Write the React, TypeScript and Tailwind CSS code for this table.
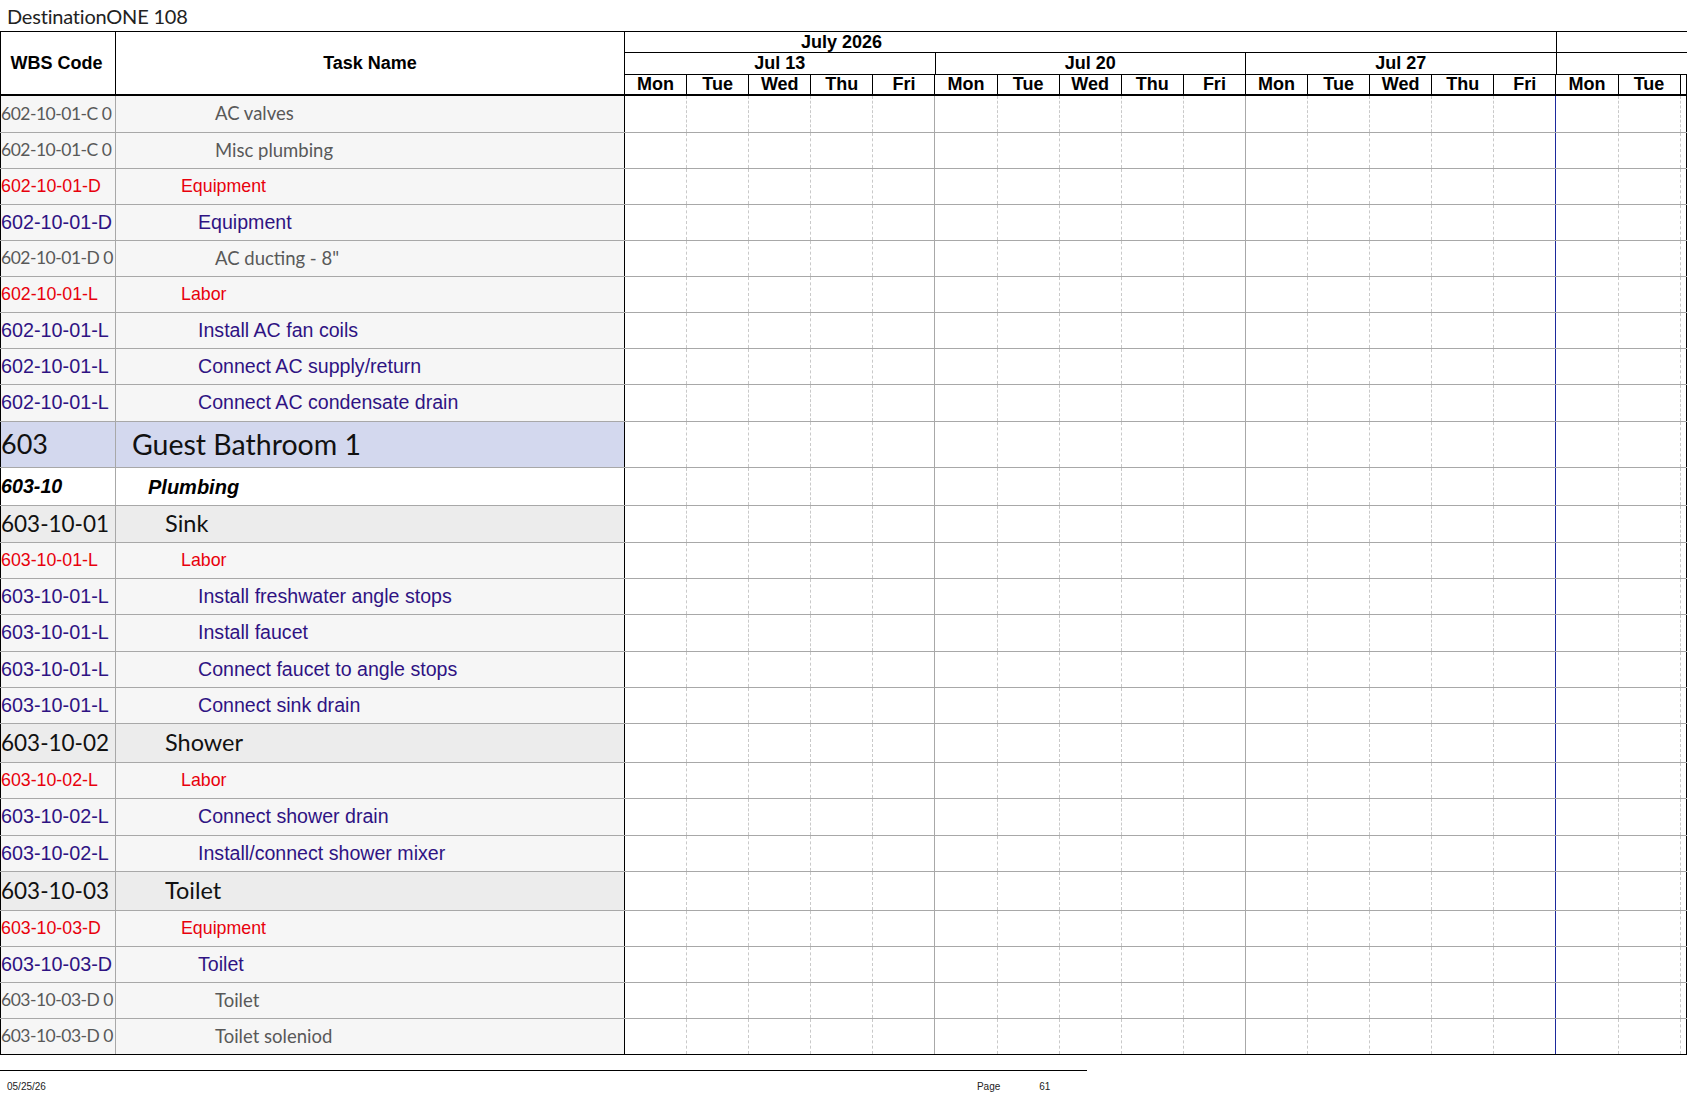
import React from 'react';

type RowType = 'gray' | 'red' | 'purple' | 'area' | 'group' | 'sub';

interface Row {
  code: string;
  name: string;
  t: RowType;
  h: number;
}

const rows: Row[] = [
  { code: '602-10-01-C 0', name: 'AC valves', t: 'gray', h: 37 },
  { code: '602-10-01-C 0', name: 'Misc plumbing', t: 'gray', h: 36 },
  { code: '602-10-01-D', name: 'Equipment', t: 'red', h: 36 },
  { code: '602-10-01-D', name: 'Equipment', t: 'purple', h: 36 },
  { code: '602-10-01-D 0', name: 'AC ducting - 8"', t: 'gray', h: 36 },
  { code: '602-10-01-L', name: 'Labor', t: 'red', h: 36 },
  { code: '602-10-01-L', name: 'Install AC fan coils', t: 'purple', h: 36 },
  { code: '602-10-01-L', name: 'Connect AC supply/return', t: 'purple', h: 36 },
  { code: '602-10-01-L', name: 'Connect AC condensate drain', t: 'purple', h: 37 },
  { code: '603', name: 'Guest Bathroom 1', t: 'area', h: 46 },
  { code: '603-10', name: 'Plumbing', t: 'group', h: 38 },
  { code: '603-10-01', name: 'Sink', t: 'sub', h: 37 },
  { code: '603-10-01-L', name: 'Labor', t: 'red', h: 36 },
  { code: '603-10-01-L', name: 'Install freshwater angle stops', t: 'purple', h: 36 },
  { code: '603-10-01-L', name: 'Install faucet', t: 'purple', h: 37 },
  { code: '603-10-01-L', name: 'Connect faucet to angle stops', t: 'purple', h: 36 },
  { code: '603-10-01-L', name: 'Connect sink drain', t: 'purple', h: 36 },
  { code: '603-10-02', name: 'Shower', t: 'sub', h: 39 },
  { code: '603-10-02-L', name: 'Labor', t: 'red', h: 36 },
  { code: '603-10-02-L', name: 'Connect shower drain', t: 'purple', h: 37 },
  { code: '603-10-02-L', name: 'Install/connect shower mixer', t: 'purple', h: 36 },
  { code: '603-10-03', name: 'Toilet', t: 'sub', h: 39 },
  { code: '603-10-03-D', name: 'Equipment', t: 'red', h: 36 },
  { code: '603-10-03-D', name: 'Toilet', t: 'purple', h: 36 },
  { code: '603-10-03-D 0', name: 'Toilet', t: 'gray', h: 36 },
  { code: '603-10-03-D 0', name: 'Toilet soleniod', t: 'gray', h: 36 },
];

// per row type: background, code text style, name text style
const styles: Record<RowType, { bg: string; code: string; name: string }> = {
  gray: {
    bg: 'bg-[#f6f6f6]',
    code: "font-['Lato'] text-[17.5px] tracking-[-0.5px] text-[#595959]",
    name: "font-['Lato'] text-[18.5px] text-[#595959] pl-[99px]",
  },
  red: {
    bg: 'bg-[#f6f6f6]',
    code: 'text-[17.8px] text-[#e8000c]',
    name: 'text-[17.8px] text-[#e8000c] pl-[65px]',
  },
  purple: {
    bg: 'bg-[#f6f6f6]',
    code: 'text-[19.8px] text-[#2f1383]',
    name: 'text-[19.6px] text-[#2f1383] pl-[82px]',
  },
  area: {
    bg: 'bg-[#d3d8ee]',
    code: "font-['Lato'] text-[27px] text-[#111]",
    name: "font-['Lato'] text-[28.5px] text-[#111] pl-[16px]",
  },
  group: {
    bg: 'bg-white',
    code: 'text-[19.7px] font-bold italic text-black',
    name: 'text-[20px] font-bold italic text-black pl-[32px]',
  },
  sub: {
    bg: 'bg-[#ececec]',
    code: "font-['Lato'] text-[22.5px] text-[#111]",
    name: "font-['Lato'] text-[23.5px] text-[#111] pl-[49px]",
  },
};

const DAYS = ['Mon', 'Tue', 'Wed', 'Thu', 'Fri'];
const WEEKS = ['Jul 13', 'Jul 20', 'Jul 27'];

function GanttCells() {
  return (
    <div className="flex flex-1 h-full">
      {Array.from({ length: 17 }).map((_, i) => (
        <div
          key={i}
          className={`w-[62.1px] shrink-0 h-full border-r ${
            i === 14
              ? 'border-solid border-[#1d2a9c]'
              : i % 5 === 4
              ? 'border-solid border-[#a8a8a8]'
              : 'border-dashed border-[#c9c9c9]'
          }`}
        />
      ))}
      <div className="flex-1 h-full border-r border-black" />
    </div>
  );
}

function TaskRow({ row, last }: { row: Row; last: boolean }) {
  const s = styles[row.t];
  return (
    <div
      className={`flex border-b ${last ? 'border-black' : 'border-[#a8a8a8]'}`}
      style={{ height: row.h }}
    >
      <div className={`w-[116px] shrink-0 flex items-center border-l border-black border-r border-r-[#a8a8a8] overflow-hidden whitespace-nowrap ${s.bg}`}>
        <span className={s.code}>{row.code}</span>
      </div>
      <div className={`w-[509px] shrink-0 flex items-center border-r border-black whitespace-nowrap ${s.bg}`}>
        <span className={s.name}>{row.name}</span>
      </div>
      <GanttCells />
    </div>
  );
}

export default function App() {
  return (
    <div className="w-[1687px] h-[1097px] bg-white overflow-hidden font-['Liberation_Sans',Arial,sans-serif] text-black">
      <div className="h-[31px] pl-[7px] flex items-center font-['Lato',sans-serif] text-[20px] text-[#222] tracking-[-0.2px]">
        DestinationONE 108
      </div>

      {/* header */}
      <div className="flex h-[65px] border-t border-b-2 border-black font-bold text-[18px]">
        <div className="w-[116px] shrink-0 flex items-center justify-center pr-[3px] border-l border-r border-black">
          WBS Code
        </div>
        <div className="w-[509px] shrink-0 flex items-center justify-center border-r border-black">
          Task Name
        </div>
        <div className="flex-1 flex flex-col">
          <div className="flex h-[21px] border-b border-black">
            <div className="w-[931.5px] shrink-0 border-r border-black pl-[176px] leading-[20px]">
              July 2026
            </div>
            <div className="flex-1" />
          </div>
          <div className="flex h-[22px] border-b border-black">
            {WEEKS.map((w) => (
              <div key={w} className="w-[310.5px] shrink-0 border-r border-black text-center leading-[21px]">
                {w}
              </div>
            ))}
            <div className="flex-1" />
          </div>
          <div className="flex flex-1">
            {[...DAYS, ...DAYS, ...DAYS, 'Mon', 'Tue'].map((d, i) => (
              <div key={i} className="w-[62.1px] shrink-0 border-r border-black text-center leading-[19px]">
                {d}
              </div>
            ))}
            <div className="flex-1 border-r border-black" />
          </div>
        </div>
      </div>

      {/* body */}
      <div>
        {rows.map((r, i) => (
          <TaskRow key={i} row={r} last={i === rows.length - 1} />
        ))}
      </div>

      {/* footer */}
      <div className="mt-[15px] w-[1087px] border-t border-black">
        <div className="flex items-center h-[27px] pt-[3px] text-[10px] text-[#222]">
          <span className="pl-[7px]">05/25/26</span>
          <span className="ml-[931px]">Page</span>
          <span className="ml-[39px]">61</span>
        </div>
      </div>
    </div>
  );
}
